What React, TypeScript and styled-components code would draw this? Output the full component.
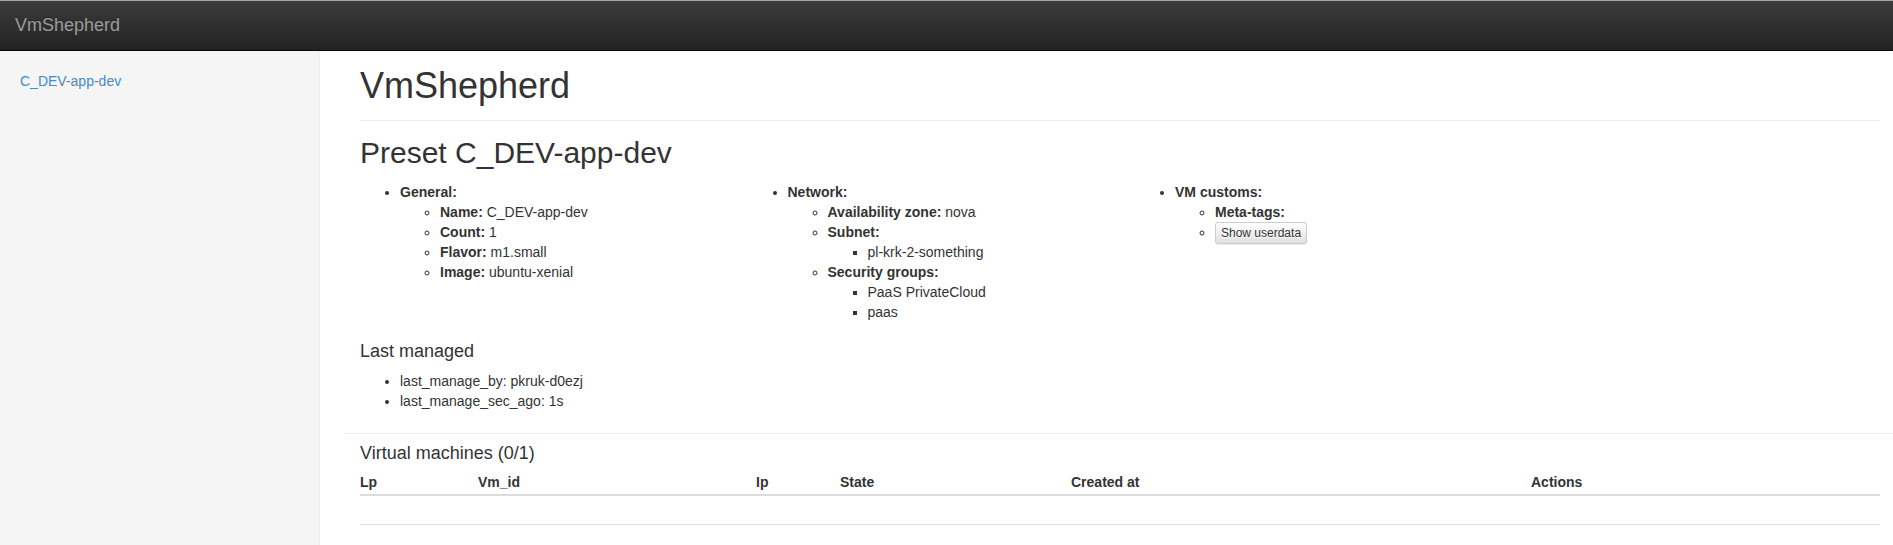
import styled, { createGlobalStyle } from "styled-components";

const GlobalStyle = createGlobalStyle`
  html, body {
    margin: 0;
    padding: 0;
  }
  body {
    font-family: "Liberation Sans", Arial, Helvetica, sans-serif;
    font-size: 14px;
    line-height: 20px;
    color: #333;
    background: #fff;
    overflow-x: hidden;
  }
  * {
    box-sizing: border-box;
  }
`;

const Navbar = styled.div`
  height: 51px;
  border-top: 1px solid #a5a5a5;
  border-bottom: 1px solid #080808;
  background-image: linear-gradient(to bottom, #3c3c3c 0%, #222 100%);
  display: flex;
  align-items: flex-start;
`;

const Brand = styled.a`
  padding: 14px 15px 0;
  font-size: 18px;
  line-height: 20px;
  color: #9d9d9d;
  text-decoration: none;
  text-shadow: 0 -1px 0 rgba(0, 0, 0, 0.25);
`;

const Layout = styled.div`
  display: flex;
  min-height: calc(100vh - 51px);
`;

const Sidebar = styled.div`
  flex: 0 0 320px;
  background: #f5f5f5;
  border-right: 1px solid #eee;
  padding: 20px 0;
`;

const SideLink = styled.a`
  display: block;
  padding: 0 20px;
  color: #428bca;
  text-decoration: none;
`;

const Main = styled.div`
  flex: 1;
  min-width: 0;
  padding: 15px 13px 0 40px;
`;

const PageHeader = styled.div`
  padding-bottom: 14px;
  border-bottom: 1px solid #eee;
`;

const Title = styled.h1`
  margin: 0;
  font-size: 36px;
  line-height: 40px;
  font-weight: 500;
`;

const Subtitle = styled.h2`
  margin: 15px 0 0;
  font-size: 30px;
  line-height: 33px;
  font-weight: 500;
`;

const InfoRow = styled.div`
  display: flex;
  margin: 13px -15px 0;
`;

const InfoCol = styled.div`
  flex: 0 0 25%;
  padding: 0 15px;
`;

const List = styled.ul<{ $top?: number }>`
  margin: ${(p) => p.$top ?? 0}px 0 0;
  padding-left: 40px;

  ul {
    margin: 0;
    padding-left: 40px;
  }
`;

const Section = styled.h4`
  margin: 19px 0 0;
  font-size: 18px;
  line-height: 20px;
  font-weight: 500;
`;

const Divider = styled.hr`
  margin: 22px -15px 0;
  border: 0;
  border-top: 1px solid #eee;
`;

const TableTitle = styled.h4`
  margin: 9px 0 0;
  font-size: 18px;
  line-height: 20px;
  font-weight: 500;
`;

const SmallButton = styled.button`
  font-family: inherit;
  font-size: 12px;
  line-height: 18px;
  padding: 1px 5px;
  color: #333;
  border: 1px solid #ccc;
  border-radius: 3px;
  background-image: linear-gradient(to bottom, #fff 0%, #e0e0e0 100%);
  text-shadow: 0 1px 0 #fff;
  box-shadow: inset 0 1px 0 rgba(255, 255, 255, 0.15), 0 1px 1px rgba(0, 0, 0, 0.075);
  cursor: pointer;
`;

const Table = styled.table`
  width: 100%;
  margin-top: 9px;
  border-collapse: collapse;
  table-layout: fixed;

  th {
    text-align: left;
    font-weight: bold;
    padding: 0 0 2px;
    line-height: 20px;
    border-bottom: 2px solid #ddd;
  }

  td {
    height: 29px;
    padding: 0;
    border-bottom: 1px solid #ddd;
  }
`;

const columns = [
  { name: "Lp", width: 118 },
  { name: "Vm_id", width: 278 },
  { name: "Ip", width: 84 },
  { name: "State", width: 231 },
  { name: "Created at", width: 460 },
  { name: "Actions", width: 349 },
];

const App = () => {
  return (
    <>
      <GlobalStyle />
      <Navbar>
        <Brand href="#">VmShepherd</Brand>
      </Navbar>
      <Layout>
        <Sidebar>
          <SideLink href="#">C_DEV-app-dev</SideLink>
        </Sidebar>
        <Main>
          <PageHeader>
            <Title>VmShepherd</Title>
          </PageHeader>
          <Subtitle>Preset C_DEV-app-dev</Subtitle>

          <InfoRow>
            <InfoCol>
              <List>
                <li>
                  <strong>General:</strong>
                  <ul>
                    <li><strong>Name:</strong> C_DEV-app-dev</li>
                    <li><strong>Count:</strong> 1</li>
                    <li><strong>Flavor:</strong> m1.small</li>
                    <li><strong>Image:</strong> ubuntu-xenial</li>
                  </ul>
                </li>
              </List>
            </InfoCol>
            <InfoCol>
              <List>
                <li>
                  <strong>Network:</strong>
                  <ul>
                    <li><strong>Availability zone:</strong> nova</li>
                    <li>
                      <strong>Subnet:</strong>
                      <ul>
                        <li>pl-krk-2-something</li>
                      </ul>
                    </li>
                    <li>
                      <strong>Security groups:</strong>
                      <ul>
                        <li>PaaS PrivateCloud</li>
                        <li>paas</li>
                      </ul>
                    </li>
                  </ul>
                </li>
              </List>
            </InfoCol>
            <InfoCol>
              <List>
                <li>
                  <strong>VM customs:</strong>
                  <ul>
                    <li><strong>Meta-tags:</strong></li>
                    <li>
                      <SmallButton type="button">Show userdata</SmallButton>
                    </li>
                  </ul>
                </li>
              </List>
            </InfoCol>
          </InfoRow>

          <Section>Last managed</Section>
          <List $top={10}>
            <li>last_manage_by: pkruk-d0ezj</li>
            <li>last_manage_sec_ago: 1s</li>
          </List>

          <Divider />

          <TableTitle>Virtual machines (0/1)</TableTitle>
          <Table>
            <colgroup>
              {columns.map((c) => (
                <col key={c.name} style={{ width: c.width }} />
              ))}
            </colgroup>
            <thead>
              <tr>
                {columns.map((c) => (
                  <th key={c.name}>{c.name}</th>
                ))}
              </tr>
            </thead>
            <tbody>
              <tr>
                {columns.map((c) => (
                  <td key={c.name} />
                ))}
              </tr>
            </tbody>
          </Table>
        </Main>
      </Layout>
    </>
  );
};

export default App;
